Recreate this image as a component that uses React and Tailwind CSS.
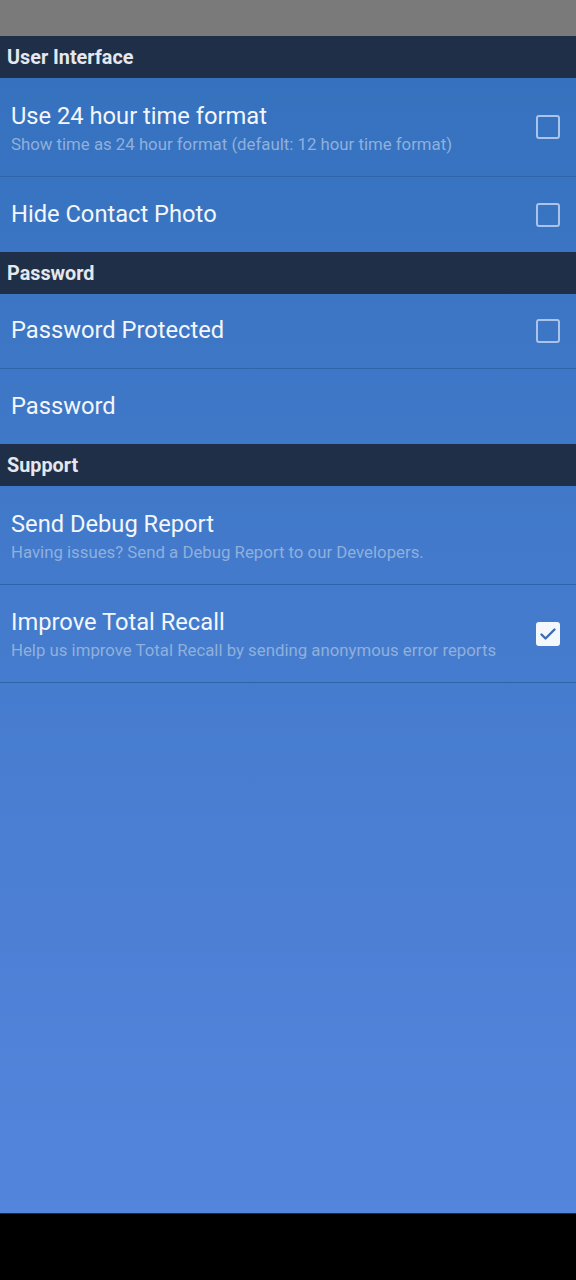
import React from "react";

function Box({ checked }) {
  if (checked) {
    return (
      <div className="w-6 h-6 rounded-[3px] bg-[#f4f7fc] flex items-center justify-center">
        <svg width="24" height="24" viewBox="0 0 24 24" fill="none" stroke="#3d6cb3" strokeWidth="2.4" strokeLinecap="round" strokeLinejoin="round">
          <path d="M5.5 12.5l4 4L18.5 7.5" />
        </svg>
      </div>
    );
  }
  return <div className="w-6 h-6 rounded-[3px] border-2 border-[#a9c3ea]" />;
}

function Header({ children }) {
  return (
    <div className="h-[42px] bg-[#1f2f48] flex items-center px-[7px] pt-[2px] text-[19.8px] font-bold text-[#e4e8ee]">
      {children}
    </div>
  );
}

function Row({ title, sub, check, h, last }) {
  return (
    <div className={`flex items-center pl-[11px] pr-4 ${h} ${last ? "" : "border-b border-[#2e64a8]"}`}>
      <div className={`flex-1 min-w-0 ${sub ? "pt-[2px]" : "pb-[2px]"}`}>
        <div className="text-[23.7px] leading-[30px] text-[#f3f6fb]">{title}</div>
        {sub && <div className="text-[16.8px] leading-[24px] text-[#8fb0dc] mt-[1px]">{sub}</div>}
      </div>
      {check !== undefined && <Box checked={check} />}
    </div>
  );
}

export default function App() {
  return (
    <div className="w-[576px] h-[1280px] flex flex-col font-['Roboto',sans-serif]">
      <div className="h-9 bg-[#7a7a7a]" />
      <div className="flex-1 flex flex-col bg-gradient-to-b from-[#3471bd] to-[#5485dd]">
        <Header>User Interface</Header>
        <Row title="Use 24 hour time format" sub="Show time as 24 hour format (default: 12 hour time format)" check={false} h="h-[99px]" />
        <Row title="Hide Contact Photo" check={false} h="h-[75px]" last />
        <Header>Password</Header>
        <Row title="Password Protected" check={false} h="h-[75px]" />
        <Row title="Password" h="h-[75px]" last />
        <Header>Support</Header>
        <Row title="Send Debug Report" sub="Having issues? Send a Debug Report to our Developers." h="h-[99px]" />
        <Row title="Improve Total Recall" sub="Help us improve Total Recall by sending anonymous error reports" check={true} h="h-[98px]" />
      </div>
      <div className="h-[67px] bg-black border-t border-[#1a2a5a]" />
    </div>
  );
}
